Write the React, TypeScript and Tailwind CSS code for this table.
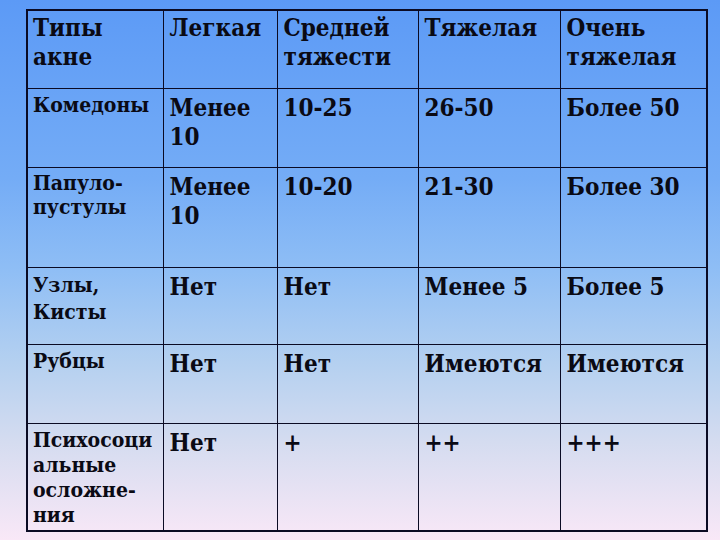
const serif = "font-['DejaVu_Serif_Condensed','DejaVu_Serif','Liberation_Serif',serif] font-bold text-[#0a0a14]";

const head = ["Типы акне", "Легкая", "Средней тяжести", "Тяжелая", "Очень тяжелая"];

const rows: { name: string[]; cells: string[]; h: string; lead: string }[] = [
  { name: ["Комедоны"], cells: ["Менее 10", "10-25", "26-50", "Более 50"], h: "h-[79px]", lead: "leading-[25px]" },
  { name: ["Папуло-", "пустулы"], cells: ["Менее 10", "10-20", "21-30", "Более 30"], h: "h-[100px]", lead: "leading-[24px]" },
  { name: ["Узлы,", "Кисты"], cells: ["Нет", "Нет", "Менее 5", "Более 5"], h: "h-[77px]", lead: "leading-[27px]" },
  { name: ["Рубцы"], cells: ["Нет", "Нет", "Имеются", "Имеются"], h: "h-[79px]", lead: "leading-[25px]" },
  { name: ["Психосоци", "альные", "осложне-", "ния"], cells: ["Нет", "+", "++", "+++"], h: "h-[108px]", lead: "leading-[25px]" },
];

const widths = ["w-[136px]", "w-[114px]", "w-[141px]", "w-[142px]", "w-[147px]"];

export default function App() {
  return (
    <div className="h-[540px] w-[720px] overflow-hidden bg-[linear-gradient(180deg,#5c9af6_0%,#74acf6_33%,#8fbef5_50%,#b4d0f0_67%,#d5dcf0_82%,#f9e8f7_100%)] pl-[26px] pt-[9px]">
      <table className={`w-[680px] table-fixed border-collapse border-2 border-[#0b0b24] ${serif}`}>
        <colgroup>
          {widths.map((w) => (
            <col key={w} className={w} />
          ))}
        </colgroup>
        <thead>
          <tr className="h-[78px]">
            {head.map((t, i) => (
              <th
                key={t}
                className={`border border-[#0b0b24] pt-[2px] text-left align-top text-[24px] font-bold leading-[29px] ${i === 0 ? "pl-[5px] pr-[4px]" : "px-[6px]"}`}
              >
                {t}
              </th>
            ))}
          </tr>
        </thead>
        <tbody>
          {rows.map((r) => (
            <tr key={r.name.join("")} className={r.h}>
              <td className={`border border-[#0b0b24] pl-[5px] pr-[2px] pt-[3px] align-top text-[21px] ${r.lead}`}>
                {r.name.map((n) => (
                  <div key={n}>{n}</div>
                ))}
              </td>
              {r.cells.map((c, i) => (
                <td key={i} className="border border-[#0b0b24] px-[6px] pt-[4px] align-top text-[24px] leading-[29px]">
                  {c}
                </td>
              ))}
            </tr>
          ))}
        </tbody>
      </table>
    </div>
  );
}
